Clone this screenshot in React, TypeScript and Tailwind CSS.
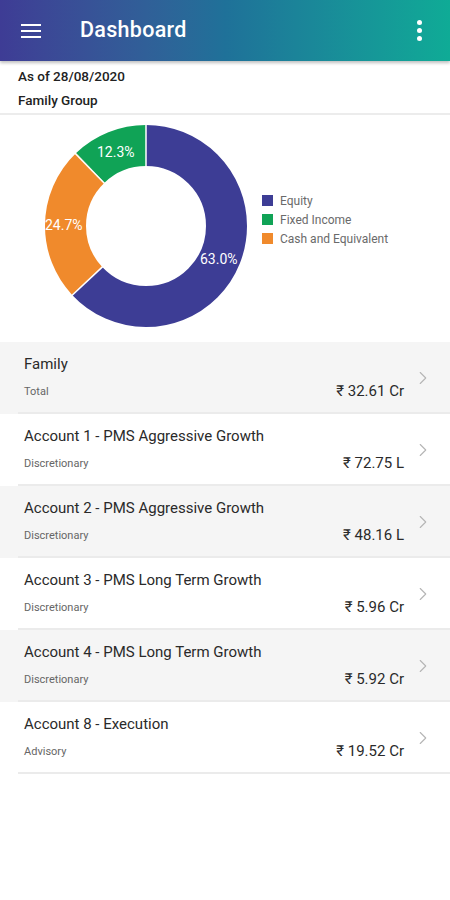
import { ChevronRight } from "lucide-react";

const rows = [
  { title: "Family", sub: "Total", amount: "₹ 32.61 Cr" },
  { title: "Account 1 - PMS Aggressive Growth", sub: "Discretionary", amount: "₹ 72.75 L" },
  { title: "Account 2 - PMS Aggressive Growth", sub: "Discretionary", amount: "₹ 48.16 L" },
  { title: "Account 3 - PMS Long Term Growth", sub: "Discretionary", amount: "₹ 5.96 Cr" },
  { title: "Account 4 - PMS Long Term Growth", sub: "Discretionary", amount: "₹ 5.92 Cr" },
  { title: "Account 8 - Execution", sub: "Advisory", amount: "₹ 19.52 Cr" },
];

const slices = [
  { pct: 63.0, color: "#3d3d95" },
  { pct: 24.7, color: "#f08a2c" },
  { pct: 12.3, color: "#10a356" },
];

const Donut = () => {
  const cx = 116;
  const cy = 110;
  const r = 80.5;
  const c = 2 * Math.PI * r;
  let acc = 0;
  const bounds: number[] = [];
  return (
    <svg width="230" height="225" viewBox="0 0 230 225">
      {slices.map((s) => {
        const len = (s.pct / 100) * c;
        const off = (acc / 100) * c;
        bounds.push(acc);
        acc += s.pct;
        return (
          <circle
            key={s.color}
            cx={cx}
            cy={cy}
            r={r}
            fill="none"
            stroke={s.color}
            strokeWidth="41"
            strokeDasharray={`${len} ${c - len}`}
            strokeDashoffset={-off}
            transform={`rotate(-90 ${cx} ${cy})`}
          />
        );
      })}
      {bounds.map((b) => {
        const a = (b / 100) * 2 * Math.PI - Math.PI / 2;
        return (
          <line
            key={b}
            x1={cx + 59 * Math.cos(a)}
            y1={cy + 59 * Math.sin(a)}
            x2={cx + 102 * Math.cos(a)}
            y2={cy + 102 * Math.sin(a)}
            stroke="#fff"
            strokeWidth="1.5"
          />
        );
      })}
      <g fill="#fff" fontSize="14" fontFamily="Roboto, sans-serif">
        <text x="67" y="41">12.3%</text>
        <text x="15" y="114">24.7%</text>
        <text x="170" y="148">63.0%</text>
      </g>
    </svg>
  );
};

export default function App() {
  return (
    <div className="w-[450px] min-h-[900px] bg-white font-['Roboto',sans-serif]">
      <header className="h-[61px] flex items-center bg-gradient-to-r from-[#3e3c95] via-[#1f7199] to-[#0fab96] shadow-[0_2px_3px_rgba(0,0,0,0.25)] relative z-10">
        <svg width="20" height="14" viewBox="0 0 20 14" className="ml-[21px]">
          <rect y="0" width="20" height="2" fill="#fff" />
          <rect y="6" width="20" height="2" fill="#fff" />
          <rect y="12" width="20" height="2" fill="#fff" />
        </svg>
        <h1 className="ml-[39px] text-white text-[21.5px] font-medium tracking-[0.3px]">Dashboard</h1>
        <div className="ml-auto mr-[28px] flex flex-col gap-[3px]">
          <span className="w-[5px] h-[5px] rounded-full bg-white" />
          <span className="w-[5px] h-[5px] rounded-full bg-white" />
          <span className="w-[5px] h-[5px] rounded-full bg-white" />
        </div>
      </header>

      <div className="px-[18px] pt-[3px] pb-[1px] border-b-2 border-[#ececec] text-[13.5px] font-medium text-[#222] leading-[24px]">
        <div>As of 28/08/2020</div>
        <div>Family Group</div>
      </div>

      <div className="flex items-center h-[227px]">
        <div className="ml-[30px]">
          <Donut />
        </div>
        <div className="ml-[2px] mt-[-18px] flex flex-col gap-[5px] text-[12px] leading-[14px] text-[#6a6a6a]">
          <div className="flex items-center gap-[7px]">
            <span className="w-[11px] h-[11px] bg-[#3d3d95]" />
            Equity
          </div>
          <div className="flex items-center gap-[7px]">
            <span className="w-[11px] h-[11px] bg-[#10a356]" />
            Fixed Income
          </div>
          <div className="flex items-center gap-[7px]">
            <span className="w-[11px] h-[11px] bg-[#f08a2c]" />
            Cash and Equivalent
          </div>
        </div>
      </div>

      <div>
        {rows.map((r, i) => (
          <div key={r.title} className={i % 2 === 0 ? "bg-[#f5f5f5]" : "bg-white"}>
            <div className="ml-[18px] h-[72px] border-b-2 border-[#ebebeb] flex items-center">
              <div className="flex-1 pl-[6px]">
                <div className="text-[15px] text-[#2a2a2a] leading-[20px]">{r.title}</div>
                <div className="flex items-end justify-between mt-[7px]">
                  <span className="text-[11px] text-[#666]">{r.sub}</span>
                  <span className="text-[15px] text-[#2a2a2a] leading-[20px]">{r.amount}</span>
                </div>
              </div>
              <ChevronRight className="ml-[8px] mr-[16px] mt-[1px] text-[#b5b5b5]" size={22} strokeWidth={1.2} />
            </div>
          </div>
        ))}
      </div>
    </div>
  );
}
